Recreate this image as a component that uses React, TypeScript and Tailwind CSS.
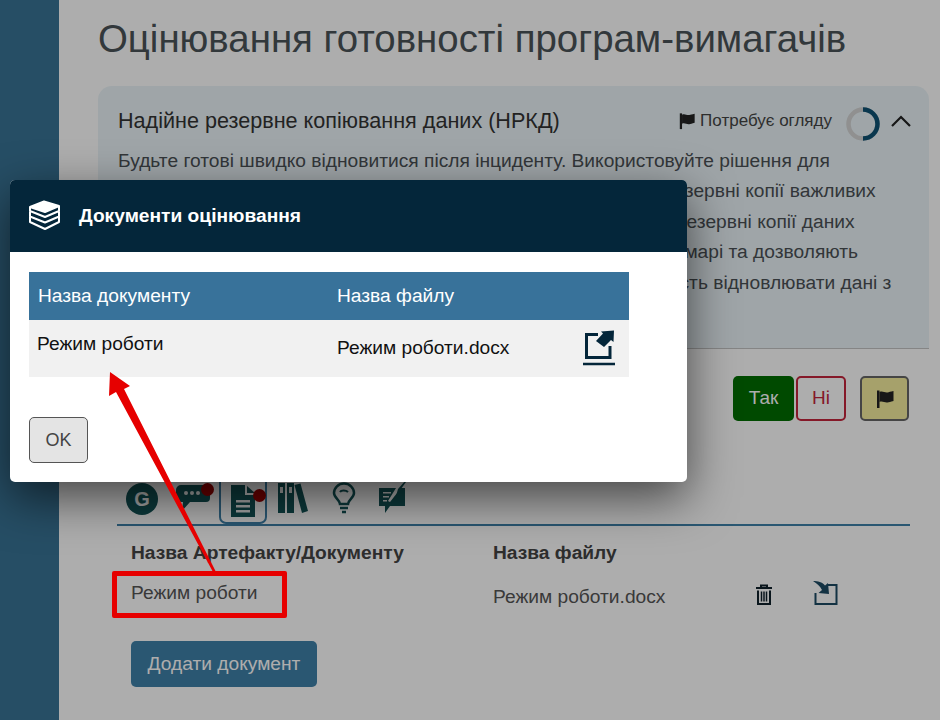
const FONT = "font-['Liberation_Sans',Arial,sans-serif]";

const cardLines = [
  "Будьте готові швидко відновитися після інциденту. Використовуйте рішення для",
  "резервного копіювання, яке автоматично регулярно створює резервні копії важливих",
  "систем та сервісів організації. Шифруйте та перевіряйте всі ці резервні копії даних",
  "зберігайте їх окремо. Використовуйте рішення які працюють у хмарі та дозволяють",
  "швидко відновити організацію. Регулярно перевіряйте можливість відновлювати дані з",
];

const FlagIcon = ({ className }: { className: string }) => (
  <svg viewBox="0 0 20 20" className={className} fill="currentColor">
    <path d="M2 1.500h2.500V19H2z" />
    <path d="M4.500 3c3-1.500 5 .8 8 .4 1.500-.2 3-.8 6-1.400v10c-3 .8-4.500 1.300-6 1.500-3 .4-5-1.800-8-.5z" />
  </svg>
);

const BooksStackIcon = () => (
  <svg viewBox="0 0 34 31" className="mb-[2px] h-[31px] w-[34px]" fill="none" stroke="white" strokeWidth="2" strokeLinejoin="round">
    <path d="M2 7 16 1.500 31 6 17 12z" fill="white" />
    <path d="M2 7v4l15 6 14-6V6" />
    <path d="M2 11.500v5l15 6 14-6v-5" />
    <path d="M2 17v5l15 7 14-7v-5" />
  </svg>
);

const ExportIcon = () => (
  <svg viewBox="0 0 32 37" className="h-[37px] w-[32px] text-[#04263a]" fill="none" stroke="currentColor">
    <path d="M15 4.500H3.500v23H27V16" strokeWidth="3" />
    <path d="M13 11 20 3.500 18 1.500 31 .5 30.500 12 28 10 21 17z" fill="currentColor" stroke="none" />
    <path d="M0 34h32" strokeWidth="2.600" />
  </svg>
);

const ImportIcon = () => (
  <svg viewBox="0 0 26 25" className="h-[25px] w-[26px] text-[#1d4a64]" fill="none" stroke="currentColor">
    <path d="M15 5h9.500v19H3.500V13" strokeWidth="2" />
    <path d="M1 1c5 0 9 1 12 4.500l3-2.500 1 11-10.500-1 3.500-3C8 6 5 3.500 1 1z" fill="currentColor" stroke="none" />
  </svg>
);

const TrashIcon = () => (
  <svg viewBox="0 0 18 22" className="h-[22px] w-[18px] text-[#10212c]" fill="none" stroke="currentColor">
    <path d="M1 4h16M6 3.500V1.500h6v2" strokeWidth="2" />
    <path d="M3 6.500v13.500h12V6.500" strokeWidth="2" />
    <path d="M6.500 7.500v10M9 7.500v10M11.500 7.500v10" strokeWidth="1.500" />
  </svg>
);

const Dot = ({ className }: { className: string }) => (
  <span className={`absolute h-[13px] w-[13px] rounded-full bg-[#a00000] ${className}`} />
);

const TabIcons = () => (
  <div className="flex h-[47px] items-start text-[#135558]">
    <div className="mt-[6px] flex h-[32px] w-[32px] items-center justify-center rounded-full bg-[#135558] text-[20px] font-bold text-[#f4f4f4]">
      G
    </div>
    <div className="relative ml-[17px] mt-[8px]">
      <svg viewBox="0 0 36 27" className="h-[27px] w-[36px]" fill="currentColor">
        <path d="M6 0h24a5 5 0 0 1 5 5v8a4 4 0 0 1-4 4H15l-8 9 1-9H6a5 5 0 0 1-5-5V5a5 5 0 0 1 5-5z" />
        <circle cx="11" cy="8" r="2" fill="#f4f4f4" />
        <circle cx="17" cy="8" r="2" fill="#f4f4f4" />
        <circle cx="23" cy="8" r="2" fill="#f4f4f4" />
      </svg>
      <Dot className="right-[-3px] top-[-2px]" />
    </div>
    <div className="relative ml-[8px] mt-[-3px] flex h-[50px] w-[48px] items-end justify-center rounded-[7px] border-2 border-[#3f80a8] pb-[5px]">
      <svg viewBox="0 0 26 32" className="h-[32px] w-[26px]" fill="currentColor">
        <path d="M1 0h14v10h10v22H1z" />
        <path d="M17 1l8 7h-8z" />
        <path d="M6 15h14v2.500H6zM6 20h14v2.500H6zM6 25h14v2.500H6z" fill="#f4f4f4" />
      </svg>
      <Dot className="right-[-1px] top-[13px]" />
    </div>
    <svg viewBox="0 0 30 32" className="ml-[11px] mt-[5px] h-[32px] w-[30px]" fill="currentColor">
      <path d="M0 1h7v30H0zM9 1h7v30H9zM16.500 3l6-1.500L30 29l-6 2z" />
      <path d="M2 5h3v6H2zM11 5h3v6h-3z" fill="#f4f4f4" />
    </svg>
    <svg viewBox="0 0 24 32" className="ml-[24px] mt-[5px] h-[32px] w-[24px]" fill="none" stroke="currentColor" strokeWidth="2.500">
      <path d="M8 22c0-4-6-6-6-11a10 9.500 0 0 1 20 0c0 5-6 7-6 11z" />
      <path d="M8 26h8M10 30h4" />
      <path d="M8 10c1-2 6-2 8 0" strokeWidth="2" />
    </svg>
    <svg viewBox="0 0 28 32" className="ml-[22px] mt-[4px] h-[32px] w-[28px]" fill="currentColor">
      <path d="M1 7h17l-8 13 2 1 11-14h4v18H12l-5 7v-7H1z" />
      <path d="M20 8 27 0l1 1-10 14z" />
      <path d="M5 11h8v1.500H5zM5 15h6v1.500H5zM5 19h4v1.500H5z" fill="#f4f4f4" />
    </svg>
  </div>
);

export default function App() {
  return (
    <div className={`relative flex h-[720px] w-[940px] overflow-hidden bg-white text-[#212529] ${FONT}`}>
      <aside className="w-[59px] shrink-0 bg-[#387496]" />

      <main className="flex-1 pl-[39px] pr-[11px]">
        <h1 className="pt-[17px] text-[38.4px] leading-[44px] text-[#4a5358]">Оцінювання готовності програм-вимагачів</h1>

        <section className="mt-[25px] h-[263px] rounded-t-[14px] border-b border-[#c4c4c4] bg-[#eaf4f8] pl-[20px] pr-[18px] pt-[20px]">
          <div className="flex h-[30px] items-center">
            <h2 className="flex-1 text-[21.6px] text-[#333]">Надійне резервне копіювання даних (НРКД)</h2>
            <FlagIcon className="h-[18px] w-[18px] text-[#222]" />
            <span className="ml-[4px] text-[17px] text-[#444]">Потребує огляду</span>
            <svg viewBox="0 0 34 34" className="ml-[14px] mt-[6px] h-[34px] w-[34px]">
              <circle cx="17" cy="17" r="14.500" fill="none" stroke="#d4d4d4" strokeWidth="4.500" />
              <path d="M17 2.500a14.500 14.500 0 0 1 0 29" fill="none" stroke="#0e5273" strokeWidth="4.500" />
            </svg>
            <svg viewBox="0 0 20 12" className="ml-[11px] h-[12px] w-[20px]" fill="none" stroke="#222" strokeWidth="2.200">
              <path d="M1 11 10 2l9 9" />
            </svg>
          </div>
          <div className="mt-[10px] text-[19.2px] leading-[30.4px] text-[#4a5055]">
            {cardLines.map((line) => (
              <p key={line} className="whitespace-nowrap">
                {line}
              </p>
            ))}
          </div>
        </section>

        <div className="mt-[27px] flex justify-end pr-[20px]">
          <button className="h-[45px] w-[61px] rounded-[5px] bg-[#006d00] text-[19px] text-white">Так</button>
          <button className="ml-[2px] h-[45px] w-[50px] rounded-[5px] border-2 border-[#c5243b] bg-white text-[19px] text-[#c5243b]">Ні</button>
          <button className="ml-[14px] flex h-[45px] w-[49px] items-center justify-center rounded-[5px] border-2 border-[#666] bg-[#f5ee9e] text-[#222]">
            <FlagIcon className="h-[20px] w-[20px]" />
          </button>
        </div>

        <div className="ml-[19px] mt-[56px] w-[793px]">
          <div className="pl-[9px]">
            <TabIcons />
          </div>
          <div className="border-t-2 border-[#3f80a8] pl-[14px]">
            <div className="grid grid-cols-[362px_262px_57px_auto] pt-[15px]">
              <div className="text-[19.2px] font-bold leading-[24px] text-[#444]">Назва Артефакту/Документу</div>
              <div className="text-[19.2px] font-bold leading-[24px] text-[#444]">Назва файлу</div>
              <div />
              <div />
              <div className="mt-[16px] text-[19.2px] leading-[24px] text-[#555]">Режим роботи</div>
              <div className="mt-[20px] text-[19.2px] leading-[24px] text-[#555]">Режим роботи.docx</div>
              <div className="mt-[19px]">
                <TrashIcon />
              </div>
              <div className="mt-[15px]">
                <ImportIcon />
              </div>
            </div>
            <button className="mt-[32px] h-[46px] w-[186px] rounded-[5px] bg-[#3f80a8] text-[19.2px] text-white">Додати документ</button>
          </div>
        </div>
      </main>

      <div className="absolute inset-0 bg-black/[.32]" />

      <div className="absolute left-[10px] top-[180px] h-[302px] w-[677px] overflow-hidden rounded-[5px] bg-white shadow-[0_16px_48px_rgba(0,0,0,0.6)]">
        <header className="flex h-[72px] items-center bg-[#04263a] pl-[18px] text-white">
          <BooksStackIcon />
          <h3 className="ml-[17px] text-[19.2px] font-bold">Документи оцінювання</h3>
        </header>
        <div className="px-[19px] pt-[20px]">
          <table className="w-[600px] table-fixed border-collapse text-[19.2px]">
            <thead>
              <tr className="h-[48px] bg-[#38729a] text-left text-white">
                <th className="w-[308px] pl-[9px] font-normal">Назва документу</th>
                <th className="font-normal">Назва файлу</th>
                <th className="w-[46px]" />
              </tr>
            </thead>
            <tbody>
              <tr className="h-[57px] bg-[#f1f1f1] text-[#111]">
                <td className="pb-[8px] pl-[8px]">Режим роботи</td>
                <td>Режим роботи.docx</td>
                <td>
                  <ExportIcon />
                </td>
              </tr>
            </tbody>
          </table>
          <button className="mt-[40px] h-[46px] w-[59px] rounded-[5px] border border-[#555] bg-[#e4e4e4] text-[18px] text-[#444]">OK</button>
        </div>
      </div>

      <div className="absolute left-[112px] top-[571px] h-[47px] w-[175px] rounded-[2px] border-[5px] border-[#e60000]" />
      <svg viewBox="0 0 940 720" className="pointer-events-none absolute inset-0 h-[720px] w-[940px]">
        <path d="M110 372 130 386 124 389 216 572 213 572 116 392 109 396z" fill="#e60000" />
      </svg>
    </div>
  );
}
